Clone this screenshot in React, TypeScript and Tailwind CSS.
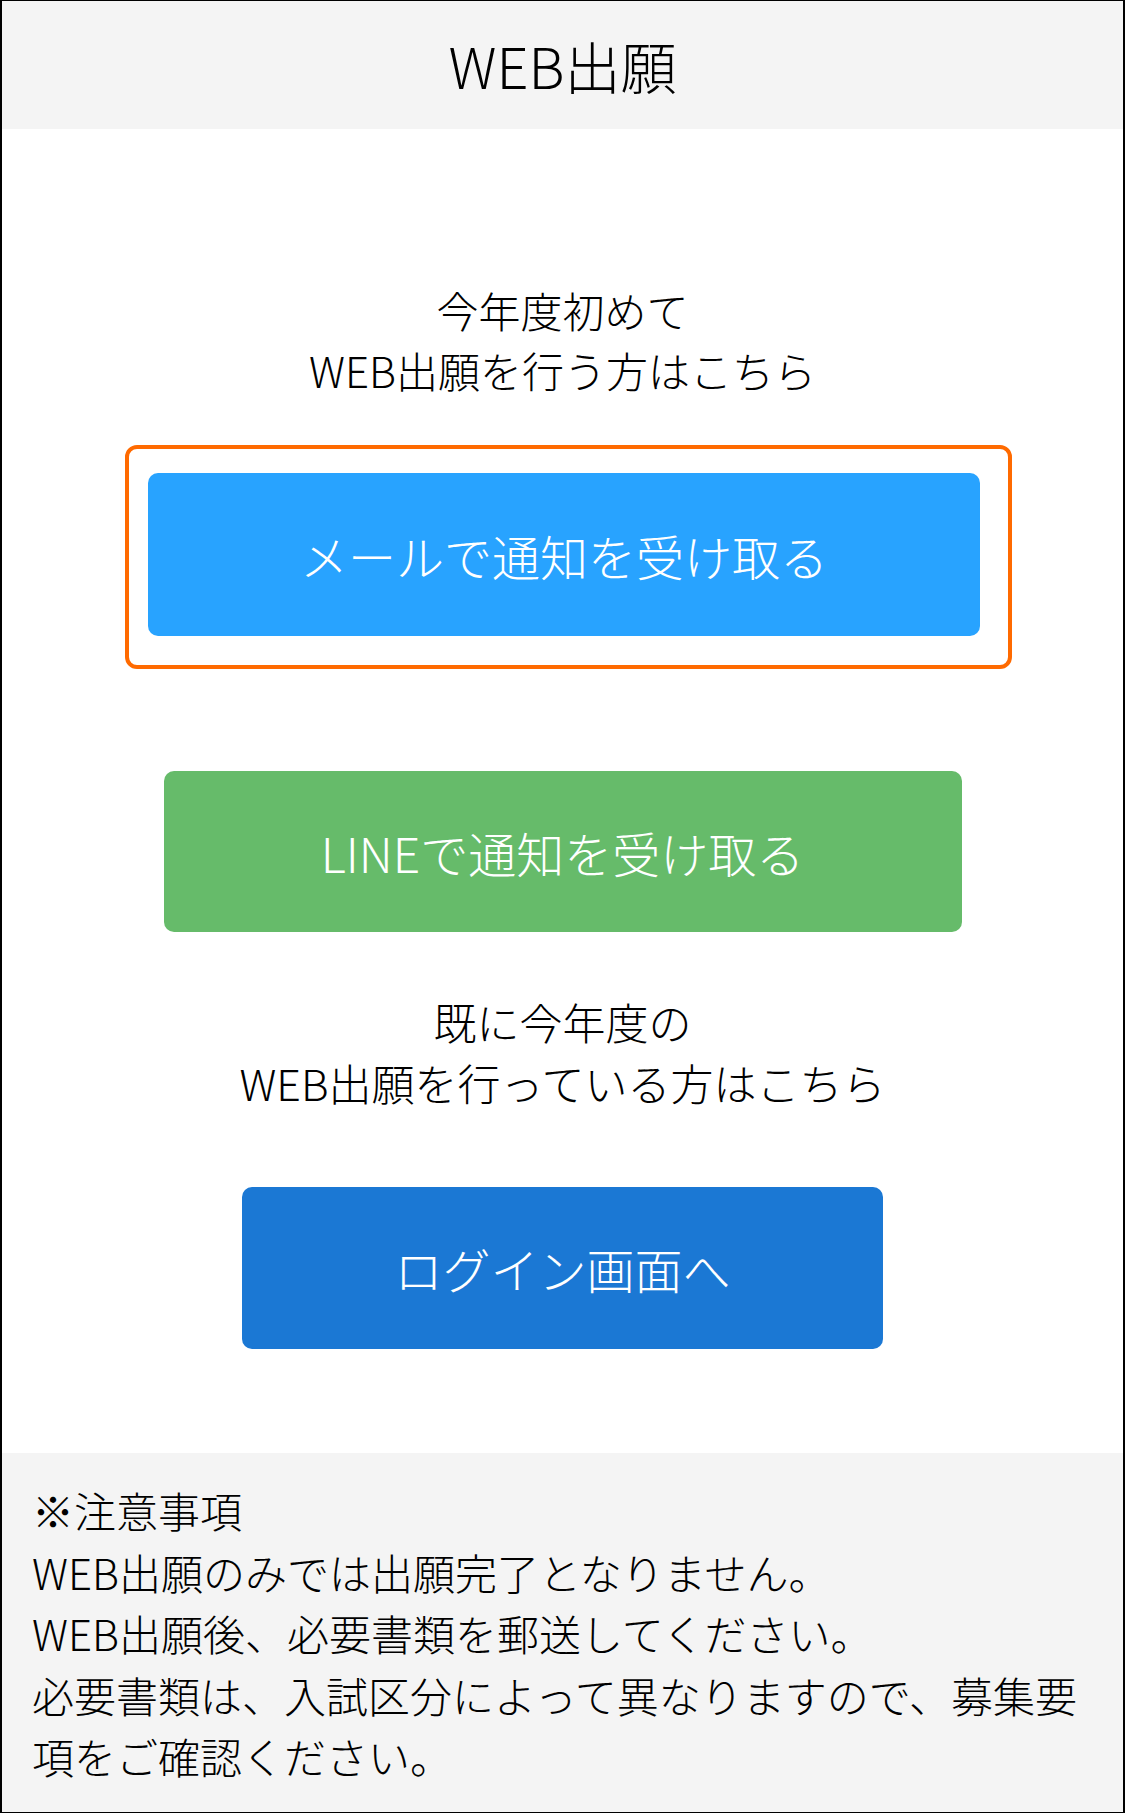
const jp = 'font-["Noto_Sans_CJK_JP","Noto_Sans",sans-serif]'

export default function App() {
  return (
    <div
      className={`${jp} font-light w-[1125px] h-[1813px] flex flex-col border-x-2 border-y border-black bg-white text-black`}
    >
      {/* Header */}
      <header className="h-[128px] shrink-0 bg-[#f4f4f4] flex items-center justify-center">
        <h1 className="text-[56px] leading-none font-light">WEB出願</h1>
      </header>

      {/* Main */}
      <main className="flex-1 flex flex-col items-center">
        <p className="mt-[151px] text-[42px] leading-[60px] text-center">
          今年度初めて
          <br />
          WEB出願を行う方はこちら
        </p>

        {/* highlighted mail button */}
        <div className="mt-[45px] ml-[12px] w-[887px] rounded-[12px] border-4 border-[#ff6a00] pl-[19px] pr-[28px] pt-[24px] pb-[29px]">
          <button className="w-[832px] h-[163px] rounded-[10px] bg-[#28a3ff] text-white text-[48px] leading-none">
            メールで通知を受け取る
          </button>
        </div>

        <button className="mt-[102px] w-[798px] h-[161px] rounded-[10px] bg-[#66bb6a] text-white text-[48px] leading-none">
          LINEで通知を受け取る
        </button>

        <p className="mt-[59px] text-[43px] leading-[61px] text-center">
          既に今年度の
          <br />
          WEB出願を行っている方はこちら
        </p>

        <button className="mt-[74px] w-[641px] h-[162px] rounded-[10px] bg-[#1b78d4] text-white text-[48px] leading-none">
          ログイン画面へ
        </button>
      </main>

      {/* Notes */}
      <footer className="h-[359px] shrink-0 bg-[#f4f4f4] pl-[30px] pr-[20px] pt-[26px] text-[42px] leading-[61.5px]">
        <p>※注意事項</p>
        <p>WEB出願のみでは出願完了となりません。</p>
        <p>WEB出願後、必要書類を郵送してください。</p>
        <p>必要書類は、入試区分によって異なりますので、募集要項をご確認ください。</p>
      </footer>
    </div>
  )
}
